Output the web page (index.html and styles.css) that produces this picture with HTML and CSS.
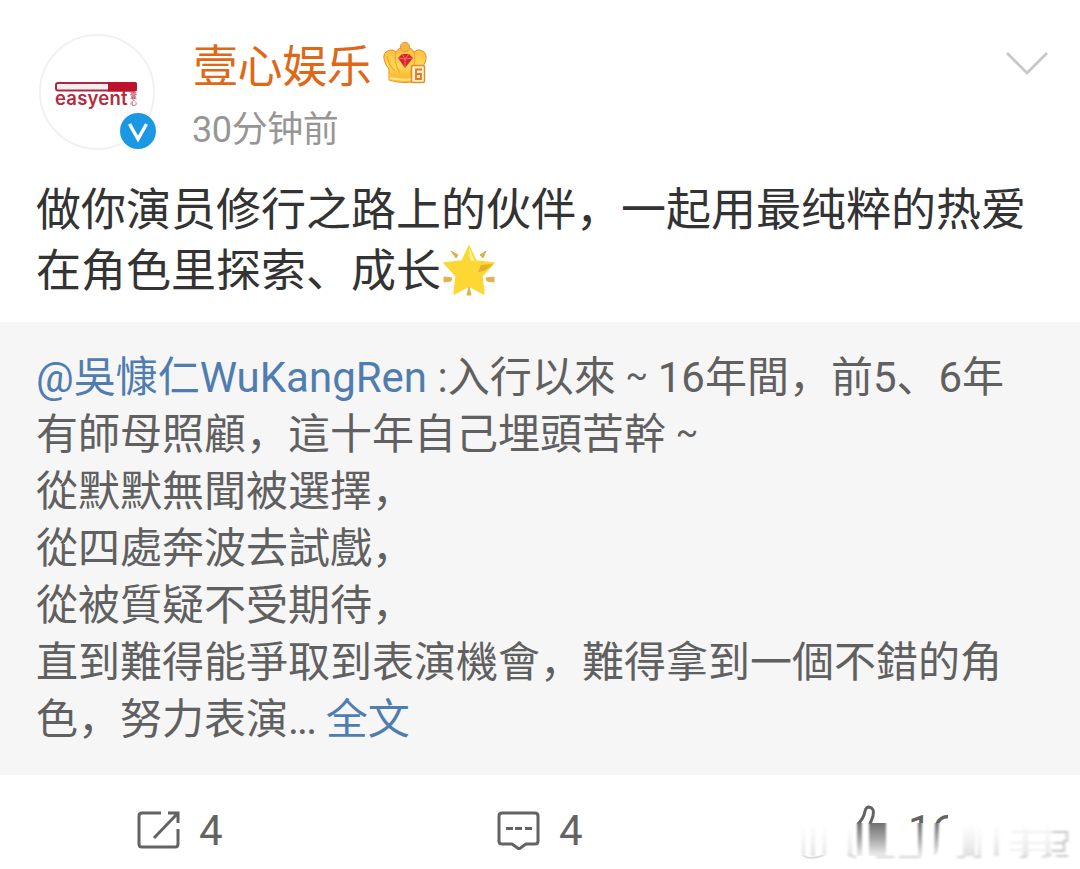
FILE: index.html
```html
<!DOCTYPE html>
<html lang="zh-CN">
<head>
<meta charset="utf-8">
<title>壹心娱乐</title>
<link rel="stylesheet" href="styles.css">
</head>
<body>
<article class="post">
  <header class="head">
    <div class="avatar">
      <svg class="bar" width="82" height="10" viewBox="0 0 82 10"><rect x="1" y="1" width="80" height="7.4" rx="2" fill="#f8eef0" stroke="#a92b42" stroke-width="2"/><path d="M53 0h27q2 0 2 2v5.500q0 2-2 2H53z" fill="#bd122b"/></svg>
      <div class="brand"><span class="brand-name">easyent</span><span class="brand-sub"><span>壹</span><span>心</span></span></div>
      <svg class="badge" width="36" height="36" viewBox="0 0 36 36"><circle cx="18" cy="18" r="18" fill="#1b98e4"/><path d="M9.500 11l8.500 15 8.500-15" fill="none" stroke="#fff" stroke-width="3.400"/></svg>
    </div>
    <div class="who">
      <div class="name-row">
        <span class="name">壹心娱乐</span>
        <svg class="crown" width="44" height="44" viewBox="0 0 44 44">
          <defs><linearGradient id="gold" x1="0" y1="0" x2="0" y2="1"><stop offset="0" stop-color="#ffbb3d"/><stop offset=".55" stop-color="#ffda55"/><stop offset="1" stop-color="#f7a62b"/></linearGradient></defs>
          <path d="M6 28C1 22-1 14 3 11q5-4 10 0 3-5 9-5t9 5q5-4 10 0c4 4 2 11-3 17v11q-16 5-32 0z" fill="url(#gold)" stroke="#e48b25" stroke-width="1"/>
          <path d="M13 11q-3 10 4 21M31 11q3 10-4 21M4 15q2 10 8 15" fill="none" stroke="#f2a838" stroke-width="1.300"/>
          <path d="M6 32q15 4 32 0v7q-16 4-32 0z" fill="#ffbd37"/><path d="M7 37q15 3 22 1" fill="none" stroke="#ffe78a" stroke-width="2"/>
          <circle cx="22" cy="6" r="4.700" fill="#f7b548" stroke="#e49a35"/>
          <path d="M15 17l4-4h7l4 4-8 10z" fill="#d92335"/><path d="M19 13l3 5 4-5M15 17l7 1 8-1M22 18v9" fill="none" stroke="#f56c65" stroke-width="1"/>
          <rect x="28.500" y="24.500" width="13" height="17" rx="1.500" fill="#fff2cf" stroke="#e38b24" stroke-width="1.500"/>
          <path d="M39 28.500h-6v9.500h5v-5h-5" fill="none" stroke="#e5761e" stroke-width="1.800"/>
        </svg>
      </div>
      <div class="time">30分钟前</div>
    </div>
    <svg class="more" width="44" height="26" viewBox="0 0 44 26"><path d="M2 2l20 20L42 2" fill="none" stroke="#c9c9c9" stroke-width="3"/></svg>
  </header>
  <p class="text">做你演员修行之路上的伙伴，一起用最纯粹的热爱<br>在角色里探索、成长<svg class="star" width="52" height="52" viewBox="0 0 52 52"><path d="M26 2l7 15 18 2-12 13 2 18-15-8-15 8 2-18L1 19l18-2z" fill="#fdd835" stroke="#fdd835" stroke-width="1.500" stroke-linejoin="round"/><path d="M26 3l5 13q-2 3-4-1z" fill="#fff59d"/><path d="M50 20l-12 1-3 7q9-1 15-8z" fill="#e8ae2b"/><path d="M8 7l7 4-2 3zM43 7l-6 4 3 3zM1 33l8 1-1 3-7 1zM51 33l-8 1 1 3 7 1zM26 43l2 8h-4z" fill="#ddb34e" stroke="#ddb34e" stroke-linejoin="round"/></svg></p>
  <section class="quote">
    <div><a>@吳慷仁WuKangRen</a> :入行以來<span class="tilde">~</span>16年間，前5、6年</div>
    <div>有師母照顧，這十年自己埋頭苦幹<span class="tilde">~</span></div>
    <div>從默默無聞被選擇，</div>
    <div>從四處奔波去試戲，</div>
    <div>從被質疑不受期待，</div>
    <div>直到難得能爭取到表演機會，難得拿到一個不錯的角</div>
    <div>色，努力表演<span class="dots">...</span> <a>全文</a></div>
  </section>
  <footer class="actions">
    <div class="action"><svg width="44" height="40" viewBox="0 0 44 40"><path d="M24 3H5Q2 3 2 6v28q0 3 3 3h33q3 0 3-3V19M31 3h10v10M41 3L17 28" fill="none" stroke="#636363" stroke-width="3"/></svg><span>4</span></div>
    <div class="action"><svg width="44" height="40" viewBox="0 0 44 40"><path d="M5 3h33q3 0 3 3v25q0 3-3 3h-9l-7 5-7-5H5q-3 0-3-3V6q0-3 3-3z" fill="none" stroke="#636363" stroke-width="3" stroke-linejoin="round"/><path d="M9 18.500h7M18 18.500h7M28 18.500h7" stroke="#636363" stroke-width="3"/></svg><span>4</span></div>
    <div class="likes">
      <span class="count">16</span>
      <svg class="smear" width="300" height="94" viewBox="780 775 300 94">
        <defs>
          <linearGradient id="dark" gradientUnits="userSpaceOnUse" x1="0" y1="823" x2="0" y2="857"><stop offset="0" stop-color="#707070"/><stop offset=".45" stop-color="#a5a5a5"/><stop offset="1" stop-color="#f4f4f4"/></linearGradient>
          <linearGradient id="pale" gradientUnits="userSpaceOnUse" x1="0" y1="824" x2="0" y2="857"><stop offset="0" stop-color="#fff"/><stop offset=".6" stop-color="#efefef"/><stop offset="1" stop-color="#dedede"/></linearGradient>
          <filter id="soft" x="-10%" y="-10%" width="120%" height="120%"><feGaussianBlur stdDeviation="1 .4"/></filter>
          <filter id="softer" x="-10%" y="-10%" width="120%" height="120%"><feGaussianBlur stdDeviation="1.800 .8"/></filter>
        </defs>
        <path d="M858 824q6-6 7-13 1-4 4-4 6 1 4 9l-3 8" fill="none" stroke="#636363" stroke-width="3"/>
        <g filter="url(#soft)">
          <path d="M869 823h17v33h-17zM857 823h5v33h-5zM918 823h4v33h-4zM935 823h4l-1 26q0 5-4 7z" fill="url(#dark)"/>
          <path d="M803 855q3 3 9 3t12-3" fill="none" stroke="#d8d8d8" stroke-width="1.500"/>
        </g>
        <g filter="url(#softer)">
          <path d="M802 825h3v30h-3zM811 825h4v31h-4zM823 825h3v30h-3zM848 830h4v25h-4zM963 826h12v30h-12zM978 826h3v30h-3zM994 826h5v30h-5zM1023 826h5v30h-5zM1046 826h4v30h-4z" fill="url(#pale)"/>
          <path d="M848 854q3 3 8 3M876 857h18M899 857h22M957 857h8M974 857h7M1020 857h7M1042 857l10-2" fill="none" stroke="#d2d2d2" stroke-width="2"/>
          <path d="M1010 832h55M1010 843h54M1010 850h54" stroke="#f0f0f0" stroke-width="2"/>
          <path d="M1052 832h15v9h-3v10h-12M1054 843h10M1056 856h12" fill="none" stroke="#c6c6c6" stroke-width="2"/>
        </g>
      </svg>
    </div>
  </footer>
</article>
</body>
</html>
```
FILE: styles.css
```css
* { box-sizing: border-box; }
body {
  margin: 0;
  background: #fff;
  font-family: Roboto, "Noto Sans CJK SC", sans-serif;
  overflow: hidden;
}
.post { width: 1080px; height: 869px; display: flex; flex-direction: column; }
.head { height: 180px; padding: 34px 31px 0 39px; display: flex; }
.avatar {
  position: relative;
  width: 116px;
  height: 116px;
  border: 2px solid #f1f1f1;
  border-radius: 50%;
  padding: 46px 0 0 14px;
}
.bar { display: block; }
.brand { display: flex; height: 20px; color: #b42b40; }
.brand-name { font: 600 18.500px/13px Inter, sans-serif; letter-spacing: .2px; width: 75px; }
.brand-sub { display: flex; flex-direction: column; gap: 0; font: 7px/7px "Noto Sans CJK SC", sans-serif; }
.badge { position: absolute; left: 79px; top: 77px; }
.who { margin-left: 38px; flex: 1; padding-top: 3px; }
.name-row { display: flex; height: 62px; }
.name { font-size: 45px; line-height: 62px; color: #df6716; letter-spacing: -.4px; }
.crown { margin: 4px 0 0 12px; }
.time { font-size: 36px; line-height: 62px; color: #969696; letter-spacing: -.4px; margin-left: -1px; }
.more { margin-top: 17px; }
.text { margin: 0; height: 142px; padding-left: 36px; font-size: 45px; line-height: 61px; color: #333; white-space: nowrap; }
.star { vertical-align: -9px; margin-left: 2px; }
.quote {
  height: 453px;
  background: #f6f6f7;
  padding: 27px 0 0 36px;
  font-size: 42px;
  line-height: 57px;
  color: #606060;
  white-space: nowrap;
}
.quote div { height: 57px; }
.quote a { color: #507daf; }
.tilde { display: inline-block; width: 42px; text-align: center; font-size: 33px; line-height: 1; vertical-align: 5px; }
.dots { letter-spacing: -2px; }
.actions { height: 94px; display: grid; grid-template-columns: 360px 360px 360px; }
.action { display: flex; align-items: center; gap: 18px; padding: 16px 0 0 137px; font-size: 42px; color: #636363; }
.likes { position: relative; height: 94px; }
.count { display: block; margin-left: 188px; width: 40px; height: 48px; padding-top: 31px; font-size: 42px; line-height: 49px; color: #636363; overflow: hidden; }
.smear { position: absolute; left: 60px; top: 0; }
```
